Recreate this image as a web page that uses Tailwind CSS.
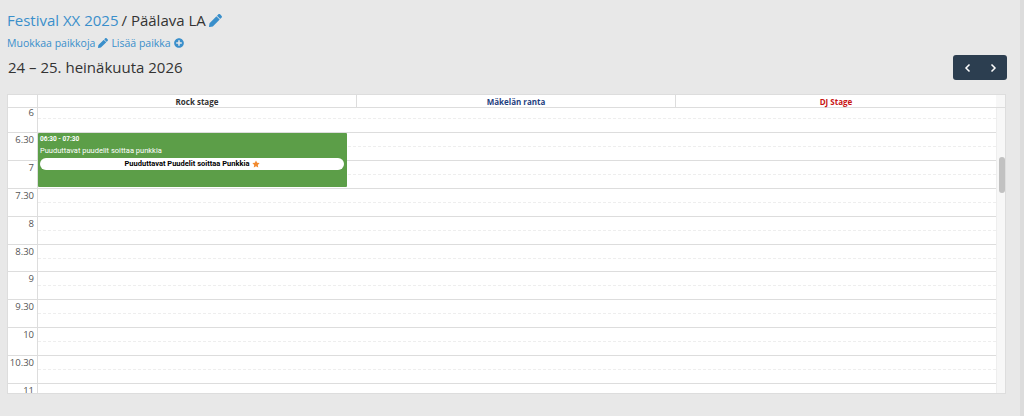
<!DOCTYPE html>
<html lang="fi">
<head>
<meta charset="utf-8">
<script src="https://cdn.jsdelivr.net/npm/@tailwindcss/browser@4"></script>
</head>
<body class="h-[416px] w-[1024px] overflow-hidden bg-[#e8e8e8] font-['Open_Sans','Noto_Sans',sans-serif] text-[#333]">
<div class="flex h-[416px]">
<main class="w-[1020px] pl-[7px] pr-[13px]">
  <h1 class="flex h-[20px] mt-[10px] items-center gap-[3px] text-[15px] leading-[20px]">
    <span class="text-[#3a8fcb]">Festival XX 2025</span><span>/ Päälava LA</span>
    <svg class="size-[13px] text-[#3a8fcb]" viewBox="0 0 512 512" fill="currentColor"><path d="M497.900 142.100l-46.100 46.100c-4.700 4.700-12.300 4.700-17 0l-111-111c-4.700-4.700-4.700-12.300 0-17l46.100-46.100c18.700-18.700 49.100-18.700 67.900 0l60.100 60.100c18.800 18.700 18.800 49.100 0 67.900zM284.200 99.800L21.600 362.400.4 483.900c-2.900 16.400 11.400 30.600 27.800 27.800l121.500-21.300 262.600-262.600c4.700-4.700 4.700-12.300 0-17l-111-111c-4.800-4.700-12.400-4.700-17.100 0z"/></svg>
  </h1>
  <div class="mt-[6px] flex h-[14px] items-center gap-[3px] text-[10.500px] leading-[14px] text-[#3a8fcb]">
    <span>Muokkaa paikkoja</span>
    <svg class="size-[10px]" viewBox="0 0 512 512" fill="currentColor"><path d="M497.900 142.100l-46.100 46.100c-4.700 4.700-12.300 4.700-17 0l-111-111c-4.700-4.700-4.700-12.300 0-17l46.100-46.100c18.700-18.700 49.100-18.700 67.900 0l60.100 60.100c18.800 18.700 18.800 49.100 0 67.900zM284.200 99.800L21.600 362.400.4 483.900c-2.900 16.400 11.400 30.600 27.800 27.800l121.500-21.300 262.600-262.600c4.700-4.700 4.700-12.300 0-17l-111-111c-4.800-4.700-12.400-4.700-17.100 0z"/></svg>
    <span>Lisää paikka</span>
    <svg class="size-[10px]" viewBox="0 0 512 512" fill="currentColor"><path d="M256 8C119 8 8 119 8 256s111 248 248 248 248-111 248-248S393 8 256 8zm144 276c0 6.600-5.400 12-12 12h-92v92c0 6.600-5.400 12-12 12h-56c-6.600 0-12-5.400-12-12v-92h-92c-6.600 0-12-5.400-12-12v-56c0-6.600 5.400-12 12-12h92v-92c0-6.600 5.400-12 12-12h56c6.600 0 12 5.400 12 12v92h92c6.600 0 12 5.400 12 12v56z"/></svg>
  </div>
  <div class="mt-[5px] flex h-[25px] items-center justify-between">
    <h2 class="pb-[2px] pl-[1px] text-[15px] leading-[20px]">24 – 25. heinäkuuta 2026</h2>
    <div class="flex h-[25px] w-[54px] items-center justify-around rounded-[3px] bg-[#2c3e50] px-[2px] text-white">
      <svg class="size-[10px]" viewBox="0 0 10 10" fill="none" stroke="currentColor" stroke-width="1.500"><path d="M6.500 1.500 3 5l3.500 3.500"/></svg>
      <svg class="size-[10px]" viewBox="0 0 10 10" fill="none" stroke="currentColor" stroke-width="1.500"><path d="M3.500 1.500 7 5 3.500 8.500"/></svg>
    </div>
  </div>
  <section class="relative mr-[1px] mt-[14px] h-[300px] overflow-hidden border border-[#ddd] bg-white text-[#555]">
    <div class="flex h-[13px] border-b border-[#ddd] text-[8px] font-bold leading-[13px]">
      <div class="w-[30px] shrink-0 border-r border-[#ddd]"></div>
      <div class="w-[319px] border-r border-[#ddd] text-center text-[#333]">Rock stage</div>
      <div class="w-[319px] border-r border-[#ddd] text-center text-[#1f3f7f]">Mäkelän ranta</div>
      <div class="w-[320px] text-center text-[#c81414]">DJ Stage</div>
      <div class="flex-1 bg-[#f7f7f7]"></div>
    </div>
    <div class="flex h-[286px]">
      <div class="w-[988px] shrink-0">
        <div class="flex h-[25.400px] border-b border-[#ddd]"><div class="w-[30px] shrink-0 border-r border-[#ddd] pr-[3px] text-right text-[9.500px] leading-[10px]">6</div><div class="mt-[10px] h-0 flex-1 border-b border-dashed border-[#eee]"></div></div>
        <div class="flex h-[27.800px] border-b border-[#ddd]"><div class="w-[30px] shrink-0 border-r border-[#ddd] pr-[3px] pt-[1px] text-right text-[9.500px] leading-[11px]">6.30</div><div class="mt-[13px] h-0 flex-1 border-b border-dashed border-[#eee]"></div></div>
        <div class="flex h-[27.800px] border-b border-[#ddd]"><div class="w-[30px] shrink-0 border-r border-[#ddd] pr-[3px] pt-[1px] text-right text-[9.500px] leading-[11px]">7</div><div class="mt-[13px] h-0 flex-1 border-b border-dashed border-[#eee]"></div></div>
        <div class="flex h-[27.800px] border-b border-[#ddd]"><div class="w-[30px] shrink-0 border-r border-[#ddd] pr-[3px] pt-[1px] text-right text-[9.500px] leading-[11px]">7.30</div><div class="mt-[13px] h-0 flex-1 border-b border-dashed border-[#eee]"></div></div>
        <div class="flex h-[27.800px] border-b border-[#ddd]"><div class="w-[30px] shrink-0 border-r border-[#ddd] pr-[3px] pt-[1px] text-right text-[9.500px] leading-[11px]">8</div><div class="mt-[13px] h-0 flex-1 border-b border-dashed border-[#eee]"></div></div>
        <div class="flex h-[27.800px] border-b border-[#ddd]"><div class="w-[30px] shrink-0 border-r border-[#ddd] pr-[3px] pt-[1px] text-right text-[9.500px] leading-[11px]">8.30</div><div class="mt-[13px] h-0 flex-1 border-b border-dashed border-[#eee]"></div></div>
        <div class="flex h-[27.800px] border-b border-[#ddd]"><div class="w-[30px] shrink-0 border-r border-[#ddd] pr-[3px] pt-[1px] text-right text-[9.500px] leading-[11px]">9</div><div class="mt-[13px] h-0 flex-1 border-b border-dashed border-[#eee]"></div></div>
        <div class="flex h-[27.800px] border-b border-[#ddd]"><div class="w-[30px] shrink-0 border-r border-[#ddd] pr-[3px] pt-[1px] text-right text-[9.500px] leading-[11px]">9.30</div><div class="mt-[13px] h-0 flex-1 border-b border-dashed border-[#eee]"></div></div>
        <div class="flex h-[27.800px] border-b border-[#ddd]"><div class="w-[30px] shrink-0 border-r border-[#ddd] pr-[3px] pt-[1px] text-right text-[9.500px] leading-[11px]">10</div><div class="mt-[13px] h-0 flex-1 border-b border-dashed border-[#eee]"></div></div>
        <div class="flex h-[27.800px] border-b border-[#ddd]"><div class="w-[30px] shrink-0 border-r border-[#ddd] pr-[3px] pt-[1px] text-right text-[9.500px] leading-[11px]">10.30</div><div class="mt-[13px] h-0 flex-1 border-b border-dashed border-[#eee]"></div></div>
        <div class="flex h-[27.800px] border-b border-[#ddd]"><div class="w-[30px] shrink-0 border-r border-[#ddd] pr-[3px] pt-[1px] text-right text-[9.500px] leading-[11px]">11</div><div class="mt-[13px] h-0 flex-1 border-b border-dashed border-[#eee]"></div></div>
      </div>
      <div class="relative flex-1 border-l border-[#eee] bg-[#f7f7f7]">
        <div class="absolute left-[2px] top-[49px] h-[36px] w-[6px] rounded-[3px] bg-[#c1c1c1]"></div>
      </div>
    </div>
    <article class="absolute left-[30px] top-[38px] h-[54px] w-[309px] rounded-[1px] bg-[#5c9e48] px-[1px] font-['Roboto',sans-serif] text-white">
      <div class="pl-[1px] pt-[2px] text-[6.500px] font-bold leading-[9px]">06:30 - 07:30</div>
      <div class="pl-[1px] pt-[1px] text-[7.500px] leading-[11px]">Puuduttavat puudelit soittaa punkkia</div>
      <div class="ml-[1px] mr-[2px] mt-[2px] flex h-[12px] items-center justify-center gap-[2px] rounded-full bg-white text-[7.500px] font-bold text-black">
        <span>Puuduttavat Puudelit soittaa Punkkia</span>
        <svg class="size-[8px]" viewBox="0 0 20 20" fill="#f28a2e"><path d="m10 1 2.800 5.800 6.200.9-4.500 4.500 1.100 6.300L10 15.500l-5.600 3 1.100-6.300L1 7.700l6.200-.9z"/></svg>
      </div>
    </article>
  </section>
</main>
<div class="w-[4px] bg-[#dcdcdc]"></div>
</div>
</body>
</html>
